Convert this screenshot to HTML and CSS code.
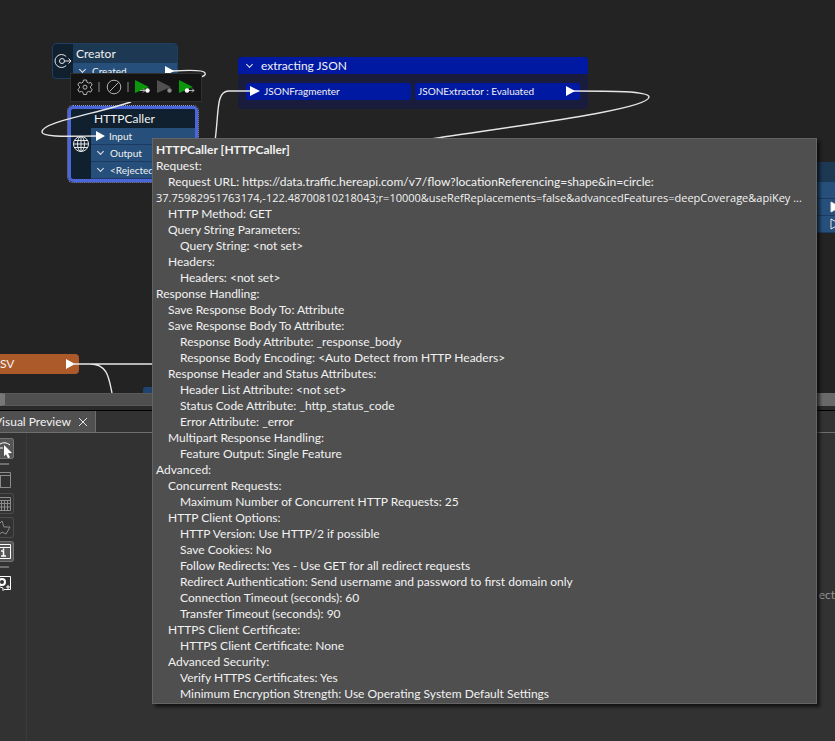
FILE: index.html
```html
<!DOCTYPE html>
<html lang="en">
    <head>
        <meta charset="utf-8">
        <title>Workspace</title>
        <link rel="stylesheet" href="styles.css">
    </head>
    <body>
        <main class="canvas">
          <section class="node creator">
            <div class="node-icon">
              <svg width="18" height="16" viewBox="0 0 18 16"><path d="M12.200 3.500A6.500 6.500 0 1 0 12.200 12.500" /><circle cx="8" cy="8" r="2.500" /><path d="M11 8h6M14.500 5.500L17 8l-2.500 2.500" /></svg>
            </div>
            <div class="node-body">
              <h2>Creator</h2>
              <div class="port"><i class="chevron"></i>Created</div>
            </div>
          </section>

          <section class="node caller">
            <div class="node-icon">
              <svg width="18" height="18" viewBox="0 0 18 18"><circle cx="9" cy="9" r="7.500" /><ellipse cx="9" cy="9" rx="3.500" ry="7.500" /><path d="M9 1.500v15M1.500 9h15M2.500 5.500h13M2.500 12.500h13" /></svg>
            </div>
            <div class="node-body">
              <h2>HTTPCaller</h2>
              <div class="port input">Input</div>
              <div class="port"><i class="chevron"></i>Output</div>
              <div class="port"><i class="chevron"></i>&lt;Rejected</div>
            </div>
          </section>

          <section class="group">
            <h2><i class="chevron"></i>extracting JSON</h2>
            <div class="group-items">
              <div class="item fragmenter">JSONFragmenter</div>
              <div class="item">JSONExtractor : Evaluated</div>
            </div>
          </section>

          <section class="writer">
            <div class="writer-head"></div>
            <div class="writer-row"></div>
            <div class="writer-row"><svg width="10" height="12" viewBox="0 0 10 12"><path d="M1 1l9 5l-9 5z" fill="#fff" /></svg></div>
            <div class="writer-row"><svg width="10" height="12" viewBox="0 0 10 12"><path d="M1 1l9 5l-9 5z" /></svg></div>
          </section>

          <section class="reader">SV</section>
          <div class="stub"></div>

          <svg class="wires" width="835" height="393" viewBox="0 0 835 393">
            <path d="M172 71C188 70 204 70 205 73C206 75 204 76 201 77" />
            <path d="M131 102C95 114 42 122 42 132C42 138 76 136 98 136" />
            <path d="M215 141C219 112 216 92 228 91H252" />
            <path d="M572 91C610 91 649 91 649 97C649 109 530 124 430 139" />
            <path d="M74 364H155M90 364C108 364 109 379 112 393" />
            <path class="head" d="M165 66l9 5l-9 5zM96 131l9 5l-9 5zM250 86l10 5l-10 5zM566 86l9 5l-9 5zM66 359l9 5l-9 5z" />
          </svg>

          <div class="toolbar">
            <button aria-label="Parameters"><svg width="18" height="18" viewBox="0 0 18 18"><path d="M7.500 2h3l.5 2.200 1.500.9 2.200-.7 1.500 2.600-1.700 1.500v1.500l1.700 1.500-1.500 2.600-2.200-.7-1.500.9-.5 2.200h-3l-.5-2.200-1.500-.9-2.200.7L1.800 11.500 3.500 10V8.500L1.800 7l1.500-2.600 2.200.7L7 4.200z" /><circle cx="9" cy="9.200" r="2" /></svg></button>
            <span class="sep"></span>
            <button aria-label="Disable"><svg width="18" height="18" viewBox="0 0 18 18"><circle cx="9" cy="9" r="6.800" /><path d="M4.500 13.500l9-9" /></svg></button>
            <span class="sep"></span>
            <button aria-label="Run to this"><svg width="18" height="18" viewBox="0 0 18 18"><path class="run" d="M2 2l14 7l-14 6z" /><path d="M7 12.500h5M10 10.500l2 2l-2 2" /><circle class="dot" cx="14.500" cy="12.500" r="2.200" /></svg></button>
            <button aria-label="Run just this" disabled><svg width="18" height="18" viewBox="0 0 18 18"><path class="off" d="M1 2l14 7l-14 6z" /><circle class="off-dot" cx="13.500" cy="12.500" r="2.200" /></svg></button>
            <button aria-label="Run from this"><svg width="18" height="18" viewBox="0 0 18 18"><path class="run" d="M1 2l14 7l-14 6z" /><path d="M9 12.500h7M14 10.500l2 2l-2 2" /><circle class="dot" cx="9" cy="12.500" r="2.200" /></svg></button>
          </div>
        </main>

        <div class="scrollbar"><span></span></div>

        <section class="preview">
          <div class="tabs">
            <div class="tab">
              <span>Visual Preview</span>
              <button aria-label="Close"><svg width="10" height="10" viewBox="0 0 10 10"><path d="M1 1l8 8M9 1l-8 8" /></svg></button>
            </div>
          </div>
          <div class="preview-body">
            <nav class="tools">
              <button class="on" aria-label="Select"><svg width="14" height="20" viewBox="0 0 14 20"><path d="M0 5q5-3 10 1M0 9h3" /><path d="M4 6l8 8l-4 .3l2 4-2 1-2-4-2 2z" fill="#fff" stroke="none" /></svg></button>
              <span class="rule"></span>
              <button class="plain" aria-label="Display"><svg width="14" height="20" viewBox="0 0 14 20"><path d="M0 2.500h10.500v15H0M0 5.500h10M.5 5v12" /></svg></button>
              <button aria-label="Table"><svg width="14" height="20" viewBox="0 0 14 20"><path d="M0 3.500h10.500v13H0M0 6.500h10M0 9.500h10M0 13h10M1.500 6v10M4.500 6v10M7.500 6v10" /></svg></button>
              <button aria-label="Graphics"><svg width="14" height="20" viewBox="0 0 14 20"><path d="M0 5l2-2l2 6h6l-4 7l-4-2l-2 2" /></svg></button>
              <button class="on" aria-label="Information"><svg width="14" height="20" viewBox="0 0 14 20"><path d="M0 2.500h10.500v14H0M0 5.500h10" /><path d="M1 9h2.500v5M1 14h5M3.500 6.500v1.500" stroke-width="1.500" /></svg></button>
              <span class="rule"></span>
              <button class="plain lit" aria-label="Options"><svg width="14" height="20" viewBox="0 0 14 20"><path d="M0 3.500h10.500v13H4" /><circle cx="2" cy="9" r="3" stroke-width="2" /><path d="M0 14l3 1v3M7 13h2v2H7z" /></svg></button>
            </nav>
            <p class="message">ect</p>
          </div>
        </section>

        <div class="tooltip" role="tooltip">
          <strong>HTTPCaller [HTTPCaller]</strong>
          <ul>
            <li>Request:
              <ul>
                <li>Request URL: https://data.traffic.hereapi.com/v7/flow?locationReferencing=shape&amp;in=circle:</li>
                <li class="query">37.75982951763174,-122.48700810218043;r=10000&amp;useRefReplacements=false&amp;advancedFeatures=deepCoverage&amp;apiKey ...</li>
                <li>HTTP Method: GET</li>
                <li>Query String Parameters:
                  <ul><li>Query String: &lt;not set&gt;</li></ul>
                </li>
                <li>Headers:
                  <ul><li>Headers: &lt;not set&gt;</li></ul>
                </li>
              </ul>
            </li>
            <li>Response Handling:
              <ul>
                <li>Save Response Body To: Attribute</li>
                <li>Save Response Body To Attribute:
                  <ul>
                    <li>Response Body Attribute: _response_body</li>
                    <li>Response Body Encoding: &lt;Auto Detect from HTTP Headers&gt;</li>
                  </ul>
                </li>
                <li>Response Header and Status Attributes:
                  <ul>
                    <li>Header List Attribute: &lt;not set&gt;</li>
                    <li>Status Code Attribute: _http_status_code</li>
                    <li>Error Attribute: _error</li>
                  </ul>
                </li>
                <li>Multipart Response Handling:
                  <ul><li>Feature Output: Single Feature</li></ul>
                </li>
              </ul>
            </li>
            <li>Advanced:
              <ul>
                <li>Concurrent Requests:
                  <ul><li>Maximum Number of Concurrent HTTP Requests: 25</li></ul>
                </li>
                <li>HTTP Client Options:
                  <ul>
                    <li>HTTP Version: Use HTTP/2 if possible</li>
                    <li>Save Cookies: No</li>
                    <li>Follow Redirects: Yes - Use GET for all redirect requests</li>
                    <li>Redirect Authentication: Send username and password to first domain only</li>
                    <li>Connection Timeout (seconds): 60</li>
                    <li>Transfer Timeout (seconds): 90</li>
                  </ul>
                </li>
                <li>HTTPS Client Certificate:
                  <ul><li>HTTPS Client Certificate: None</li></ul>
                </li>
                <li>Advanced Security:
                  <ul>
                    <li>Verify HTTPS Certificates: Yes</li>
                    <li>Minimum Encryption Strength: Use Operating System Default Settings</li>
                  </ul>
                </li>
              </ul>
            </li>
          </ul>
        </div>
    </body>
</html>
```
FILE: styles.css
```css
* {box-sizing: border-box}
html, body {padding: 0; margin: 0}
body {
  display: flex;
  flex-direction: column;
  height: 100vh;
  position: relative;
  overflow: hidden;
  background: #323232;
  color: #f2f2f2;
  font: 12px/16px Lato, "Open Sans", sans-serif;
}
h2 {
  margin: 0;
  font-size: 12px;
  font-weight: normal;
}
button {
  display: flex;
  align-items: center;
  justify-content: center;
  padding: 0;
  border: 0;
  background: none;
}
svg {
  display: block;
  fill: none;
  stroke: #e6e6e6;
}

/* canvas */
.canvas {
  flex: 1;
  position: relative;
  overflow: hidden;
  background: #232323;
}
.node {
  position: absolute;
  display: flex;
  overflow: hidden;
  background: #10202f;
}
.node-icon {
  display: flex;
  align-items: center;
  justify-content: center;
  width: 20px;
}
.node-body {
  flex: 1;
  background: #26507b;
}
.node h2 {
  height: 19px;
  padding: 2px 3px;
  background: #1d3853;
}
.creator {
  top: 43px;
  left: 52px;
  width: 126px;
  height: 36px;
  border: 1px solid #1f3f60;
  border-radius: 4px;
}
.caller {
  top: 106px;
  left: 68px;
  width: 130px;
  border: 3px solid #4a66d8;
  border-radius: 5px;
  outline: 1px dotted #8c9ae0;
}
.caller h2 {
  background: #10202f;
}
.port {
  display: flex;
  align-items: center;
  height: 17px;
  padding-left: 6px;
  gap: 6px;
  font-size: 10px;
  border-bottom: 1px solid #1b3c60;
}
.input {
  padding-left: 18px;
}
.chevron {
  width: 5px;
  height: 5px;
  margin: 0 1px 3px;
  border: solid #e6e6e6;
  border-width: 0 1px 1px 0;
  transform: rotate(45deg);
}
.group {
  position: absolute;
  top: 57px;
  left: 238px;
  width: 350px;
  border-radius: 4px;
  background: #191c3c;
}
.group h2 {
  display: flex;
  align-items: center;
  gap: 8px;
  height: 17px;
  padding-left: 8px;
  border-radius: 4px 4px 0 0;
  background: #0019a3;
}
.group-items {
  display: grid;
  grid-template-columns: 1fr 1fr;
  gap: 4px;
  padding: 9px 8px 9px;
}
.item {
  height: 17px;
  padding-left: 3px;
  border-radius: 3px;
  background: #0019a3;
  font-size: 10px;
}
.fragmenter {
  padding-left: 18px;
}
.writer {
  position: absolute;
  top: 162px;
  right: 0;
  width: 24px;
  background: #26507b;
}
.writer-head {
  height: 20px;
  background: #1d3853;
}
.writer-row {
  display: flex;
  align-items: center;
  justify-content: flex-end;
  height: 17px;
  margin-right: -5px;
  border-bottom: 1px solid #1b3c60;
}
.reader {
  position: absolute;
  top: 354px;
  left: 0;
  width: 79px;
  height: 20px;
  line-height: 20px;
  border-radius: 0 4px 4px 0;
  background: #ad5a2a;
}
.stub {
  position: absolute;
  top: 387px;
  left: 143px;
  width: 20px;
  height: 10px;
  border-radius: 3px;
  background: #1f4470;
}
.wires {
  position: absolute;
  top: 0;
  left: 0;
  stroke-width: 1.4;
}
.wires .head {
  fill: #fff;
  stroke: none;
}
.toolbar {
  position: absolute;
  top: 73px;
  left: 70px;
  display: flex;
  align-items: center;
  justify-content: space-between;
  width: 132px;
  height: 29px;
  padding: 0 5px 2px;
  border: 1px solid #303030;
  background: #141414;
}
.toolbar svg {
  stroke: #b4b4b4;
}
.sep {
  width: 2px;
  height: 10px;
  background: #505050;
}
.toolbar .run {
  fill: #0b960b;
  stroke: none;
}
.toolbar .dot {
  fill: #fff;
  stroke: none;
}
.toolbar .off {
  fill: #505050;
  stroke: none;
}
.toolbar .off-dot {
  fill: #8c8c8c;
  stroke: none;
}

.scrollbar {
  height: 17px;
  border: solid #2a2a2a;
  border-width: 0 0 4px;
  background: #696969;
}
.scrollbar span {
  display: block;
  width: 70%;
  height: 13px;
  border: solid #5a5a5a;
  border-width: 1px 0;
  background: #4f4f4f;
  border-left: 5px solid #777;
}

/* preview panel */
.preview {
  height: 331px;
  display: flex;
  flex-direction: column;
  border-top: 1px solid #000;
}
.tabs {
  display: flex;
  height: 22px;
  border-bottom: 1px solid #6e6e6e;
}
.tab {
  display: flex;
  align-items: center;
  gap: 7px;
  width: 96px;
  background: #505050;
  border-right: 1px solid #6e6e6e;
}
.tab span {
  margin-left: -6px;
  white-space: nowrap;
}
.preview-body {
  flex: 1;
  display: flex;
}
.tools {
  width: 27px;
  padding-top: 5px;
  border-right: 1px solid #3c3c3c;
}
.tools button {
  width: 14px;
  height: 21px;
  margin-bottom: 3px;
  border: 1px solid #4b4b4b;
  border-left: 0;
  border-radius: 0 3px 3px 0;
}
.tools svg {
  flex: none;
  stroke: #8c8c8c;
}
.tools .on {
  background: #555;
  border-color: #747474;
}
.tools .on svg, .tools .lit svg {
  stroke: #fff;
}
.tools .plain {
  border-color: transparent;
}
.rule {
  display: block;
  width: 9px;
  height: 2px;
  margin: 4px 0;
  background: #6e6e6e;
}
.message {
  align-self: center;
  margin: 16px 0 0 auto;
  color: #969696;
}

.tooltip {
  position: absolute;
  top: 138px;
  left: 152px;
  right: 18px;
  padding: 3px 3px 1px;
  border: 1px solid #646464;
  background: #4f4f4f;
  box-shadow: 3px 3px 3px rgba(0, 0, 0, 0.6);
  white-space: nowrap;
}
.tooltip ul {
  margin: 0;
  padding: 0;
  list-style: none;
}
.tooltip ul ul {
  text-indent: 12px;
}
.tooltip ul ul ul {
  text-indent: 24px;
}
.tooltip .query {
  font-family: "Open Sans", sans-serif;
  font-size: 11px;
  text-indent: 0;
}
```
